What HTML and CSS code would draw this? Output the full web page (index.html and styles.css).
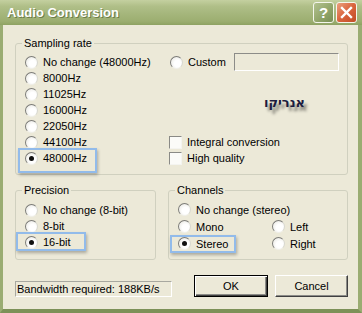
FILE: index.html
```html
<!DOCTYPE html>
<html>
<head>
<meta charset="utf-8">
<link rel="stylesheet" href="styles.css">
</head>
<body>
<div class="window">
  <div class="titlebar">
    <span class="title">Audio Conversion</span>
    <div class="tb-buttons">
      <span class="tb-btn help">?</span>
      <span class="tb-btn close"><svg width="13" height="13" viewBox="0 0 13 13"><path d="M2 2 L11 11 M11 2 L2 11" stroke="#fff" stroke-width="2.4" stroke-linecap="square"/></svg></span>
    </div>
  </div>
  <div class="client">
    <fieldset class="group sampling">
      <legend>Sampling rate</legend>
      <div class="sampling-body">
        <div class="col-left">
          <div class="opt"><span class="radio"></span><span>No change (48000Hz)</span></div>
          <div class="opt"><span class="radio"></span><span>8000Hz</span></div>
          <div class="opt"><span class="radio"></span><span>11025Hz</span></div>
          <div class="opt"><span class="radio"></span><span>16000Hz</span></div>
          <div class="opt"><span class="radio"></span><span>22050Hz</span></div>
          <div class="opt"><span class="radio"></span><span>44100Hz</span></div>
          <div class="opt"><span class="radio checked"></span><span>48000Hz</span><span class="hl hl-48k"></span></div>
        </div>
        <div class="col-right">
          <div class="opt custom"><span class="radio"></span><span>Custom</span><span class="field"></span></div>
          <div class="watermark">אנריקו</div>
          <div class="opt chk1"><span class="check"></span><span>Integral conversion</span></div>
          <div class="opt chk2"><span class="check"></span><span>High quality</span></div>
        </div>
      </div>
    </fieldset>
    <div class="row2">
      <fieldset class="group precision">
        <legend>Precision</legend>
        <div class="opt"><span class="radio"></span><span>No change (8-bit)</span></div>
        <div class="opt"><span class="radio"></span><span>8-bit</span></div>
        <div class="opt"><span class="radio checked"></span><span>16-bit</span><span class="hl hl-16"></span></div>
      </fieldset>
      <fieldset class="group channels">
        <legend>Channels</legend>
        <div class="ch-grid">
          <div class="opt wide"><span class="radio"></span><span>No change (stereo)</span></div>
          <div class="opt"><span class="radio"></span><span>Mono</span></div>
          <div class="opt"><span class="radio"></span><span>Left</span></div>
          <div class="opt"><span class="radio checked"></span><span>Stereo</span><span class="hl hl-st"></span></div>
          <div class="opt"><span class="radio"></span><span>Right</span></div>
        </div>
      </fieldset>
    </div>
    <div class="footer">
      <div class="status">Bandwidth required: 188KB/s</div>
      <button class="btn default">OK</button>
      <button class="btn cancel">Cancel</button>
    </div>
  </div>
</div>
</body>
</html>
```

FILE: styles.css
```css
html, body {
  margin: 0;
  padding: 0;
}
body {
  width: 362px;
  height: 313px;
  overflow: hidden;
  font: 11px "Liberation Sans", Arial, sans-serif;
  color: #000;
}
.window {
  width: 362px;
  height: 313px;
  display: flex;
  flex-direction: column;
}
.titlebar {
  height: 25px;
  flex: none;
  display: flex;
  align-items: center;
  padding: 0 5px 0 7px;
  background: linear-gradient(#c4d0a0 0%, #b0bf88 25%, #a5b67c 55%, #9cae70 85%, #8ea262 100%);
}
.title {
  flex: 1;
  color: #fff;
  font-weight: bold;
  font-size: 13px;
  text-shadow: 1px 1px 0 #6c7d4a;
}
.tb-buttons {
  display: flex;
  gap: 2px;
}
.tb-btn {
  width: 21px;
  height: 21px;
  box-sizing: border-box;
  border: 1px solid #f4f6ec;
  border-radius: 3px;
  display: flex;
  align-items: center;
  justify-content: center;
}
.help {
  background: linear-gradient(135deg, #b3c290 0%, #8fa367 60%, #7a8f55 100%);
  color: #fff;
  font: bold 15px "Liberation Sans", Arial, sans-serif;
}
.close {
  background: linear-gradient(135deg, #eba07f 0%, #d9643d 50%, #c24c26 100%);
}
.client {
  flex: 1;
  background: #ece9d8;
  border-style: solid;
  border-color: #9aac72;
  border-width: 0 4px 4px 3px;
  border-bottom-color: #7d9158;
  padding: 11px 10px 12px 12px;
  display: flex;
  flex-direction: column;
}
.group {
  margin: 0;
  box-sizing: border-box;
  min-width: 0;
  border: 1px solid #d0d0bf;
  border-radius: 3px;
}
.group legend {
  padding: 0 2px;
  margin-left: -3px;
  line-height: 14px;
}
.sampling {
  padding: 4px 8px 8px 9px;
}
.sampling-body {
  display: flex;
}
.col-left {
  width: 144px;
  flex: none;
}
.col-right {
  flex: 1;
  display: grid;
  grid-template-rows: repeat(7, 16px);
}
.opt {
  display: flex;
  align-items: center;
  gap: 5px;
  height: 16px;
  position: relative;
  white-space: nowrap;
}
.radio {
  width: 13px;
  height: 13px;
  flex: none;
  box-sizing: border-box;
  border-radius: 50%;
  border: 1px solid;
  border-color: #7c7c78 #d8d8d0 #f0f0ea #7c7c78;
  background: radial-gradient(circle at 60% 60%, #ffffff 35%, #e4e3dc 100%);
  position: relative;
}
.radio.checked::after {
  content: "";
  position: absolute;
  left: 3px;
  top: 3px;
  width: 5px;
  height: 5px;
  border-radius: 50%;
  background: #111;
}
.check {
  width: 13px;
  height: 13px;
  flex: none;
  box-sizing: border-box;
  border: 1px solid;
  border-color: #8a8a86 #f4f4f0 #f4f4f0 #8a8a86;
  background: #fbfbf8;
}
.custom {
  grid-row: 1;
  margin-left: 1px;
}
.field {
  margin-left: auto;
  width: 105px;
  height: 18px;
  flex: none;
  box-sizing: border-box;
  border: 1px solid;
  border-color: #8c8c88 #fff #fff #8c8c88;
  background: #ece9d8;
}
.watermark {
  grid-row: 3 / span 2;
  align-self: center;
  padding-left: 95px;
  font: bold 13px "DejaVu Sans", sans-serif;
  color: #1c1c40;
  direction: rtl;
  text-align: left;
  unicode-bidi: plaintext;
  text-shadow: 3px 4px 3px rgba(0, 0, 0, 0.45);
}
.chk1 { grid-row: 6; }
.chk2 { grid-row: 7; }
.hl {
  position: absolute;
  box-sizing: border-box;
  border: 2px solid #92bbea;
  box-shadow: 1px 2px 3px rgba(0, 0, 0, 0.28);
  pointer-events: none;
}
.hl-48k {
  left: -7px;
  top: -2px;
  width: 79px;
  height: 25px;
}
.hl-16 {
  left: -9px;
  top: -2px;
  width: 70px;
  height: 19px;
}
.hl-st {
  left: -8px;
  top: 0;
  width: 66px;
  height: 18px;
}
.row2 {
  display: flex;
  gap: 12px;
  margin-top: 8px;
}
.precision {
  width: 141px;
  flex: none;
  padding: 5px 8px 9px 9px;
}
.channels {
  flex: 1;
  padding: 4px 8px 7px 9px;
}
.ch-grid {
  display: grid;
  grid-template-columns: 94px 1fr;
  grid-auto-rows: 17px;
}
.ch-grid .opt {
  height: 17px;
}
.ch-grid .wide {
  grid-column: 1 / span 2;
}
.footer {
  display: flex;
  align-items: flex-end;
  margin-top: 15px;
  height: 22px;
}
.status {
  width: 157px;
  height: 16px;
  box-sizing: border-box;
  border: 1px solid;
  border-color: #a8a8a0 #fff #fff #a8a8a0;
  padding-left: 1px;
  line-height: 14px;
  white-space: nowrap;
}
.btn {
  box-sizing: border-box;
  height: 22px;
  width: 74px;
  padding: 0;
  font: 11px "Liberation Sans", Arial, sans-serif;
  color: #000;
  background: #ece9d8;
  border: 1px solid;
  border-color: #fff #404040 #404040 #fff;
  box-shadow: inset -1px -1px #8c8c88;
  border-radius: 0;
}
.btn.default {
  margin-left: 22px;
  border-color: #000;
  box-shadow: inset 1px 1px #fff, inset -1px -1px #404040, inset -2px -2px #8c8c88;
}
.btn.cancel {
  margin-left: 7px;
  width: 73px;
}
```
